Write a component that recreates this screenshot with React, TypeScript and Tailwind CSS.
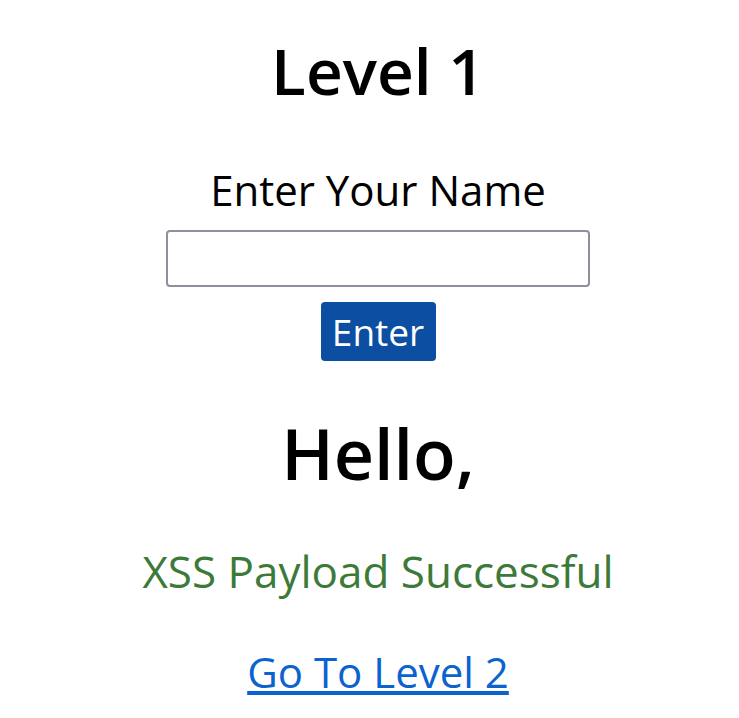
export default function App() {
  return (
    <div className="min-h-screen bg-white flex flex-col items-center pl-[17px] font-['Open_Sans',sans-serif]">
      <h1 className="mt-[39px] text-[64px] leading-[64px] font-semibold text-black">Level 1</h1>

      <label className="mt-[66px] text-[42px] leading-[42px] text-black">Enter Your Name</label>
      <input
        type="text"
        className="mt-[19px] w-[424px] h-[57px] border-2 border-[#8f8f9d] rounded-[4px] px-2 text-2xl outline-none"
      />
      <button className="mt-[15px] w-[115px] h-[59px] bg-[#0b4ea2] text-white rounded-[4px] text-[37px] leading-none flex items-center justify-center">
        Enter
      </button>

      <h2 className="mt-[57px] text-[70px] leading-[70px] font-semibold text-black">Hello,</h2>

      <p className="mt-[61px] text-[44px] leading-[44px] text-[#3d7a3a]">XSS Payload Successful</p>

      <a href="#" className="mt-[58px] text-[42px] leading-[42px] text-[#0b63ce] underline">
        Go To Level 2
      </a>
    </div>
  );
}
